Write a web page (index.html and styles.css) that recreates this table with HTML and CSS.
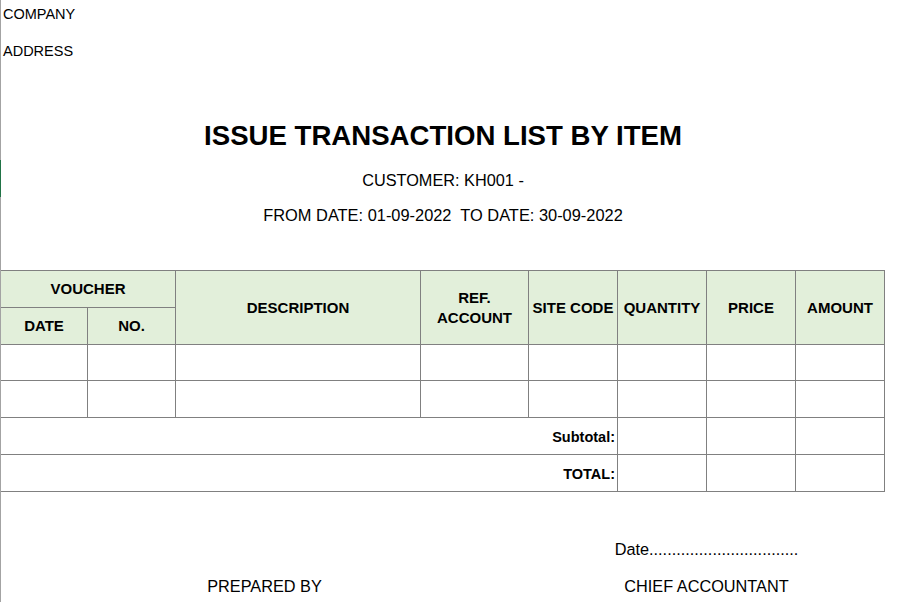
FILE: index.html
```html
<!DOCTYPE html>
<html>
<head>
<meta charset="utf-8">
<title>Issue Transaction List by Item</title>
<link rel="stylesheet" href="styles.css">
</head>
<body>
<div class="sheet">
  <div class="edge">
    <div class="edge-top"></div>
    <div class="edge-mark"></div>
    <div class="edge-rest"></div>
  </div>
  <div class="content">
    <div class="company">COMPANY</div>
    <div class="address">ADDRESS</div>
    <h1 class="title">ISSUE TRANSACTION LIST BY ITEM</h1>
    <div class="customer">CUSTOMER: KH001 -</div>
    <div class="period">FROM DATE: 01-09-2022&nbsp; TO DATE: 30-09-2022</div>

    <div class="grid">
      <div class="cell head voucher">VOUCHER</div>
      <div class="cell head tall desc">DESCRIPTION</div>
      <div class="cell head tall ref">REF.<br>ACCOUNT</div>
      <div class="cell head tall site">SITE CODE</div>
      <div class="cell head tall qty">QUANTITY</div>
      <div class="cell head tall price">PRICE</div>
      <div class="cell head tall amount">AMOUNT</div>
      <div class="cell head">DATE</div>
      <div class="cell head">NO.</div>

      <div class="cell"></div><div class="cell"></div><div class="cell"></div><div class="cell"></div>
      <div class="cell"></div><div class="cell"></div><div class="cell"></div><div class="cell"></div>

      <div class="cell"></div><div class="cell"></div><div class="cell"></div><div class="cell"></div>
      <div class="cell"></div><div class="cell"></div><div class="cell"></div><div class="cell"></div>

      <div class="cell label">Subtotal:</div>
      <div class="cell"></div><div class="cell"></div><div class="cell"></div>

      <div class="cell label">TOTAL:</div>
      <div class="cell"></div><div class="cell"></div><div class="cell"></div>
    </div>

    <div class="footer">
      <div class="foot-left"></div>
      <div class="foot-right date-line">Date.................................</div>
      <div class="foot-left sign">PREPARED BY</div>
      <div class="foot-right sign">CHIEF ACCOUNTANT</div>
    </div>
  </div>
</div>
</body>
</html>
```

FILE: styles.css
```css
html, body {
  margin: 0;
  padding: 0;
  background: #ffffff;
}

body {
  font-family: "Liberation Sans", Arial, sans-serif;
  color: #000000;
}

.sheet {
  display: flex;
  min-height: 602px;
}

.edge {
  width: 1px;
  display: flex;
  flex-direction: column;
  flex: none;
}

.edge-top {
  height: 160px;
  background: #a3a3a3;
}

.edge-mark {
  height: 37px;
  background: #217346;
}

.edge-rest {
  flex: 1;
  background: #a3a3a3;
}

.content {
  width: 884px;
  flex: none;
}

.company {
  margin-top: 1px;
  font-size: 14.5px;
  line-height: 26px;
  padding-left: 2px;
}

.address {
  font-size: 14.5px;
  line-height: 26px;
  padding-left: 2px;
  margin-top: 11px;
}

.title {
  margin: 55px 0 0;
  font-size: 27.6px;
  font-weight: bold;
  line-height: 34px;
  text-align: center;
}

.customer {
  margin-top: 14px;
  font-size: 16.3px;
  line-height: 26px;
  text-align: center;
}

.period {
  margin-top: 9px;
  font-size: 16.4px;
  line-height: 26px;
  text-align: center;
}

.grid {
  margin-top: 42px;
  display: grid;
  grid-template-columns: 86px 87px 244px 107px 88px 88px 88px 88px;
  grid-template-rows: 36px 36px 35px 36px 36px 36px;
  gap: 1px;
  background: #808080;
  border-top: 1px solid #808080;
  border-right: 1px solid #808080;
  border-bottom: 1px solid #808080;
  width: 883px;
}

.cell {
  background: #ffffff;
}

.head {
  background: #e2efda;
  font-size: 15px;
  font-weight: bold;
  line-height: 20px;
  display: flex;
  align-items: center;
  justify-content: center;
  text-align: center;
}

.voucher {
  grid-column: 1 / 3;
}

.tall {
  grid-row: 1 / 3;
}

.desc { grid-column: 3; }
.ref { grid-column: 4; }
.site { grid-column: 5; }
.qty { grid-column: 6; }
.price { grid-column: 7; }
.amount { grid-column: 8; }

.label {
  grid-column: 1 / 6;
  font-size: 14.5px;
  font-weight: bold;
  display: flex;
  align-items: center;
  justify-content: flex-end;
  padding-top: 1px;
  padding-right: 2px;
}

.footer {
  display: grid;
  grid-template-columns: 527px 357px;
  margin-top: 45px;
  font-size: 16.3px;
}

.foot-left,
.foot-right {
  text-align: center;
  line-height: 24px;
}

.sign {
  margin-top: 13px;
}
```
